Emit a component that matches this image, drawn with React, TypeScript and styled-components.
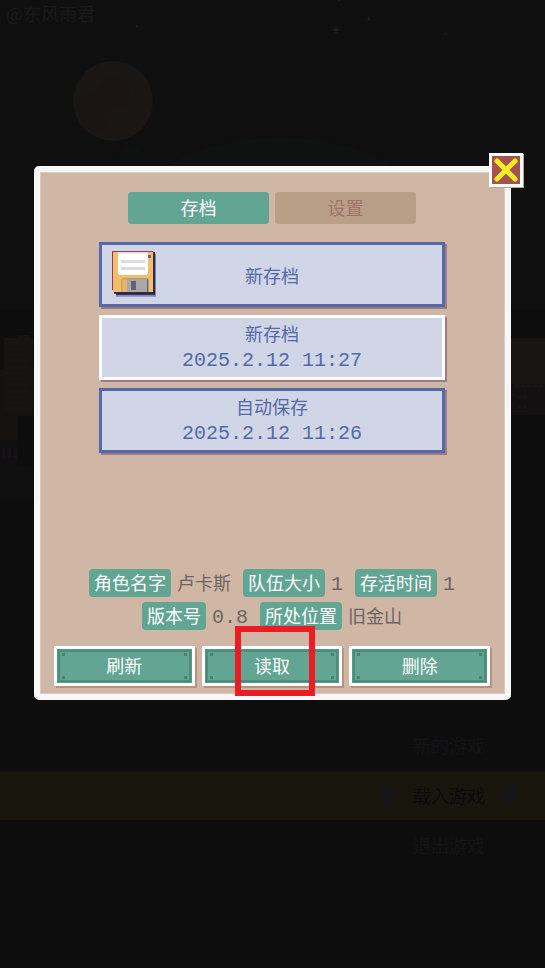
import React, { useState } from "react";
import styled, { createGlobalStyle } from "styled-components";

const cjk = `"Noto Sans CJK SC", sans-serif`;
const mono = `"Liberation Mono", "Noto Sans CJK SC", monospace`;
const teal = "#61a592";

const GlobalStyle = createGlobalStyle`
  * { box-sizing: border-box; }
  body { margin: 0; background: #0d0d0d; }
  button { margin: 0; padding: 0; border: 0; background: none; font: inherit; color: inherit; cursor: pointer; }
`;

const Screen = styled.div`
  display: grid;
  min-height: 100vh;
  font: 18px/24px ${cjk};
  overflow: hidden;
  position: relative;
`;

const Scenery = styled.svg`
  position: absolute;
  top: 0;
  left: 0;
`;

const TitleScreen = styled.div`
  grid-area: 1 / 1;
  position: relative;
  display: flex;
  flex-direction: column;
  justify-content: space-between;
  padding: 1px 0 97px;
`;

const Credit = styled.div`
  padding-left: 6px;
  color: #1a1a1a;
`;

const MainMenu = styled.nav`
  display: flex;
  flex-direction: column;
`;

const MenuItem = styled.button<{ $active?: boolean }>`
  && {
    display: flex;
    align-items: center;
    justify-content: flex-end;
    gap: 16px;
    height: ${(p) => (p.$active ? 49 : 51)}px;
    padding: 0 ${(p) => (p.$active ? 29 : 60)}px 2px 0;
    background: ${(p) => (p.$active ? "#18150d" : "transparent")};
    color: ${(p) => (p.$active ? "#0a0a0b" : "#141416")};
  }
`;

const ModalLayer = styled.div`
  grid-area: 1 / 1;
  position: relative;
  padding: 166px 34px 0;
`;

const Dialog = styled.section`
  position: relative;
  display: flex;
  flex-direction: column;
  align-items: center;
  padding: 20px 15px 8px 14px;
  border: 6px solid #f7f7f7;
  border-radius: 5px;
  background: #d0b6a4;
  box-shadow: inset 0 0 0 1px #dccabd;
`;

const CloseButton = styled.button`
  && {
    position: absolute;
    top: -19px;
    right: -18px;
    width: 34px;
    height: 34px;
    border: 3px solid #fff;
    background: #a85151;
    box-shadow: 1px 1px 0 #c99c90;
  }
  svg { display: block; margin: auto; }
`;

const Tabs = styled.div`
  display: flex;
  gap: 6px;
  margin-bottom: 18px;
`;

const Tab = styled.button<{ $active: boolean }>`
  && {
    width: 141px;
    height: 32px;
    padding-bottom: 2px;
    border-radius: 4px;
    background: ${(p) => (p.$active ? teal : "#ba9f88")};
    color: ${(p) => (p.$active ? "#fff" : "#9d7468")};
  }
`;

const SlotList = styled.div`
  display: flex;
  flex-direction: column;
  gap: 8px;
  width: 100%;
  max-width: 346px;
  min-height: 327px;
`;

const Slot = styled.button<{ $selected: boolean }>`
  && {
    position: relative;
    display: flex;
    flex-direction: column;
    align-items: center;
    justify-content: center;
    height: 65px;
    border: 3px solid ${(p) => (p.$selected ? "#fff" : "#5469ab")};
    background: #d0d6e6;
    color: #5469ab;
    box-shadow: 2px 2px 0 #a07b7b;
  }
`;

const SlotName = styled.span`
  line-height: 28px;
`;

const SlotTime = styled.time`
  margin-bottom: 2px;
  font: 20px/28px ${mono};
`;

const Floppy = styled.svg`
  position: absolute;
  top: 6px;
  left: 10px;
`;

const Details = styled.dl`
  display: flex;
  flex-wrap: wrap;
  justify-content: center;
  gap: 5px 12px;
  margin: 0 0 16px;
`;

const Detail = styled.div`
  display: flex;
  align-items: center;
  gap: 6px;
`;

const Term = styled.dt`
  padding: 1px 5px 3px;
  border-radius: 4px;
  background: ${teal};
  color: #fff;
`;

const Value = styled.dd<{ $numeric?: boolean }>`
  margin: 0;
  padding: ${(p) => (p.$numeric ? "3px 0 0" : "0 0 2px")};
  color: #6b6663;
  font: ${(p) => (p.$numeric ? `20px/24px ${mono}` : `18px/24px ${cjk}`)};
`;

const Actions = styled.div`
  display: grid;
  grid-template-columns: repeat(3, 1fr);
  gap: 7px;
  width: 100%;
`;

const ActionCell = styled.div`
  position: relative;
  display: grid;
`;

const rivet = (x: string, y: string) => `linear-gradient(#448570, #448570) ${x} ${y} / 3px 3px no-repeat`;

const ActionButton = styled.button`
  && {
    height: 40px;
    padding-bottom: 2px;
    border: 3px solid #fff;
    color: #fff;
    background:
      ${rivet("left 5px", "top 4px")},
      ${rivet("right 5px", "top 4px")},
      ${rivet("left 5px", "bottom 4px")},
      ${rivet("right 5px", "bottom 4px")},
      ${teal};
    box-shadow: inset 0 0 0 1px #569a86, inset 0 0 0 3px #4c8c78, 2px 2px 0 #b8917f;
  }
`;

const Highlight = styled.div`
  position: absolute;
  inset: -20px 27px -10px 33px;
  border: 6px solid #ed1c24;
  pointer-events: none;
`;

function Scene() {
  return (
    <Scenery width="545" height="968" viewBox="0 0 545 968" aria-hidden="true">
      <rect width="545" height="310" fill="#0f0f0f" />
      <ellipse cx="280" cy="190" rx="124" ry="52" fill="#0e1311" />
      <circle cx="113" cy="101" r="40" fill="#191614" />
      <path d="M76 100l18-10 14-14 18 6 6 20-22 10-8 22-20-10z" fill="#1a1514" />
      <circle cx="130" cy="160" r="15" fill="#0d1210" />
      <g fill="#1c1c1c">
        <path d="M335 27h2v2h2v2h-2v2h-2v-2h-2v-2h2z" />
        <path d="M136 25h2v3h-2zM368 17h1v4h-1zM367 19h4v1h-4zM445 33h1v2h-1zM338 0h2v1h-2z" />
      </g>
      <rect y="370" width="34" height="70" fill="#15110f" />
      <rect y="440" width="34" height="60" fill="#100f10" />
      <path d="M4 338h13v-3h12v3h4v74H4z" fill="#161411" />
      <path d="M5 343h24M5 349h24M5 355h24M5 361h24M5 367h24M5 373h24M5 379h24M5 385h24M5 391h24M5 397h24M5 403h24" stroke="#191613" />
      <path d="M18 416h16v50H18z" fill="#0e0d0e" />
      <path d="M2 448h3v10H2zM8 448h3v10H8zM14 448h3v10h-3z" fill="#151315" />
      <rect x="511" y="338" width="34" height="46" fill="#181512" />
      <rect x="511" y="384" width="34" height="31" fill="#141011" />
      <path d="M515 386h4M521 386h4M527 386h4M533 386h4M539 386h4M518 397h3M523 397h3M518 407h3M523 407h3" stroke="#181416" strokeWidth="3" />
    </Scenery>
  );
}

function MenuMarker({ flip }: { flip?: boolean }) {
  return (
    <svg width="15" height="19" viewBox="0 0 15 19" aria-hidden="true">
      <path d={flip ? "M15 0H9L4 4L0 10L4 15L8 19H15Z" : "M0 0H6L11 4L15 10L11 15L7 19H0Z"} fill="#151517" />
    </svg>
  );
}

function FloppyIcon() {
  return (
    <Floppy width="44" height="46" viewBox="36 33 132 138" aria-hidden="true">
      <path d="M48 42H168V170H48Z" fill="#7c88c4" />
      <path d="M42 36H165V164H48V161H42Z" fill="#24243c" />
      <path d="M36 33H160V157H39V151H36Z" fill="#983c55" />
      <path d="M39 36H159V156H39Z" fill="#efbf6d" />
      <path d="M54 36H144V102H141V105H57V102H54Z" fill="#fff" />
      <path d="M54 36H144V41H54Z" fill="#e2dfe5" />
      <path d="M63 60H135V69H63ZM63 81H135V90H63Z" fill="#dcdcde" />
      <path d="M144 45H153V54H144Z" fill="#686983" />
      <path d="M64 118H67V114H144V118H147V156H64Z" fill="#bc9475" />
      <path d="M67 118H81V156H67Z" fill="#e8b669" />
      <path d="M81 117H141V156H81Z" fill="#a8a8a8" />
      <path d="M141 118H144V156H141ZM93 123H108V150H93Z" fill="#65627f" />
    </Floppy>
  );
}

const slots = [
  { name: "新存档", time: "" },
  { name: "新存档", time: "2025.2.12 11:27" },
  { name: "自动保存", time: "2025.2.12 11:26" },
];

const details = [
  { term: "角色名字", value: "卢卡斯" },
  { term: "队伍大小", value: "1", numeric: true },
  { term: "存活时间", value: "1", numeric: true },
  { term: "版本号", value: "0.8", numeric: true },
  { term: "所处位置", value: "旧金山" },
];

export default function App() {
  const [tab, setTab] = useState("存档");
  const [selected, setSelected] = useState(1);

  return (
    <>
      <GlobalStyle />
      <Screen>
        <Scene />
        <TitleScreen>
          <Credit>@东风雨君</Credit>
          <MainMenu>
            <MenuItem>新的游戏</MenuItem>
            <MenuItem $active>
              <MenuMarker />
              载入游戏
              <MenuMarker flip />
            </MenuItem>
            <MenuItem>退出游戏</MenuItem>
          </MainMenu>
        </TitleScreen>
        <ModalLayer>
          <Dialog role="dialog" aria-label="存档">
            <CloseButton aria-label="关闭">
              <svg width="24" height="24" viewBox="0 0 24 24">
                <path d="M3 3L21 21M21 3L3 21" stroke="#f8ec22" strokeWidth="5" strokeLinecap="round" />
              </svg>
            </CloseButton>
            <Tabs role="tablist">
              {["存档", "设置"].map((t) => (
                <Tab key={t} role="tab" aria-selected={tab === t} $active={tab === t} onClick={() => setTab(t)}>
                  {t}
                </Tab>
              ))}
            </Tabs>
            <SlotList>
              {slots.map((s, i) => (
                <Slot key={i} $selected={selected === i} onClick={() => setSelected(i)}>
                  {!s.time && <FloppyIcon />}
                  <SlotName>{s.name}</SlotName>
                  {s.time && <SlotTime>{s.time}</SlotTime>}
                </Slot>
              ))}
            </SlotList>
            <Details>
              {details.map((d) => (
                <Detail key={d.term}>
                  <Term>{d.term}</Term>
                  <Value $numeric={d.numeric}>{d.value}</Value>
                </Detail>
              ))}
            </Details>
            <Actions>
              <ActionCell>
                <ActionButton>刷新</ActionButton>
              </ActionCell>
              <ActionCell>
                <ActionButton>读取</ActionButton>
                <Highlight />
              </ActionCell>
              <ActionCell>
                <ActionButton>删除</ActionButton>
              </ActionCell>
            </Actions>
          </Dialog>
        </ModalLayer>
      </Screen>
    </>
  );
}
